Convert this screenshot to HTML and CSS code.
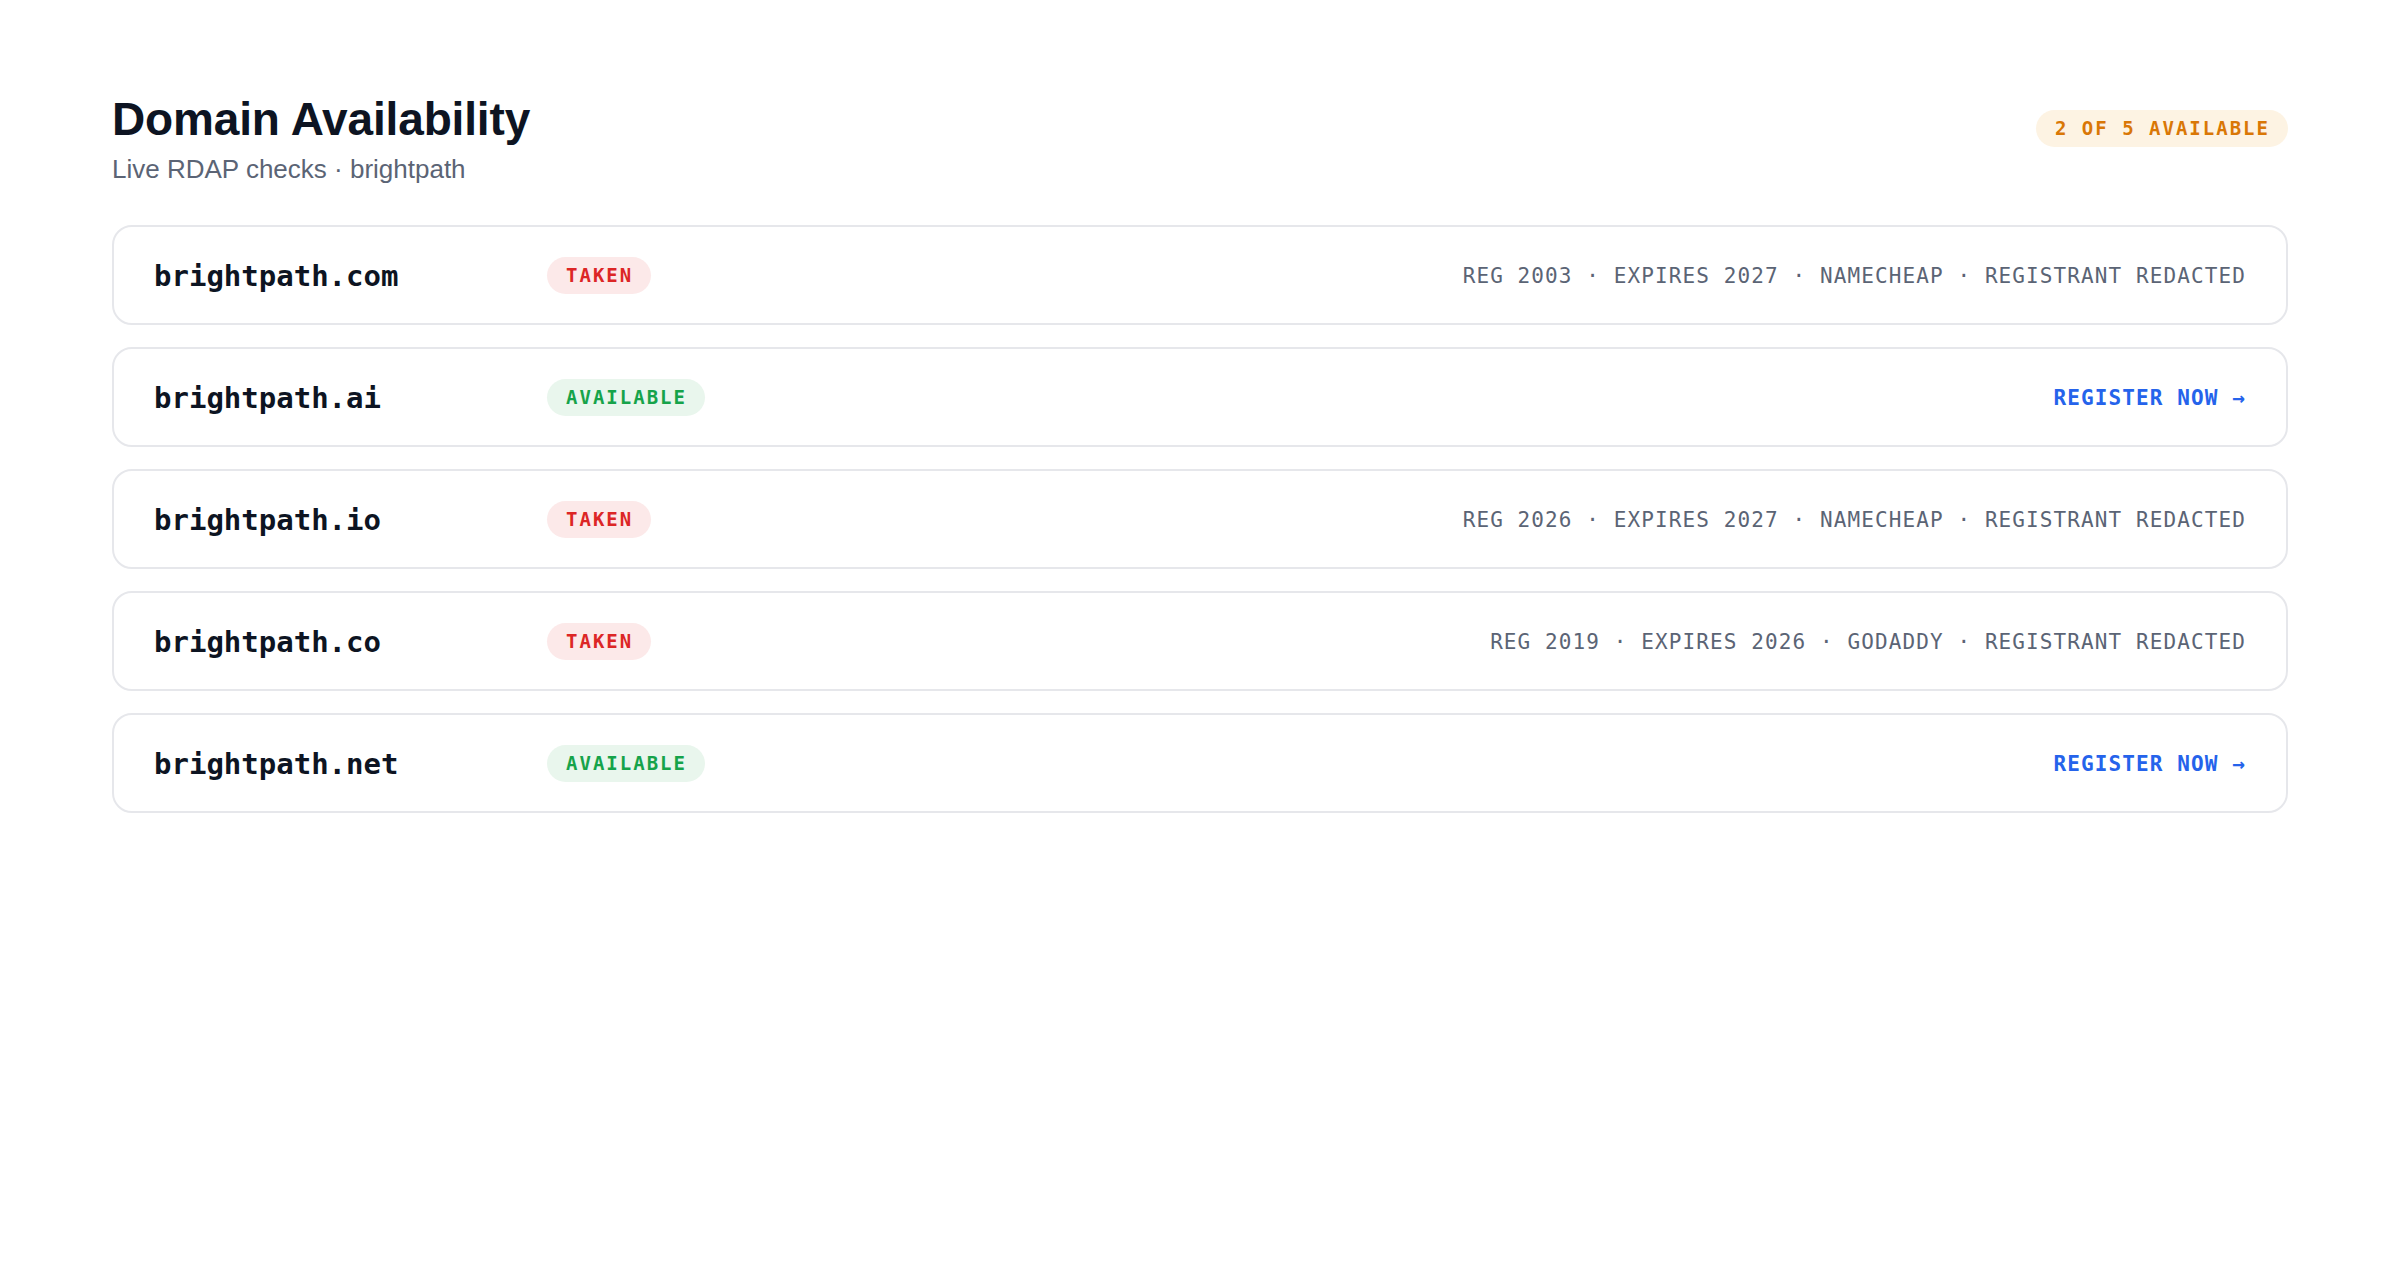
FILE: index.html
```html
<!DOCTYPE html>
<html lang="en">
<head>
<meta charset="utf-8">
<title>Domain Availability</title>
<link rel="stylesheet" href="styles.css">
</head>
<body>
<main class="page">
  <header class="header">
    <div class="titles">
      <h1 class="title">Domain Availability</h1>
      <p class="subtitle">Live RDAP checks · brightpath</p>
    </div>
    <span class="pill pill-summary">2 OF 5 AVAILABLE</span>
  </header>

  <ul class="list">
    <li class="card">
      <span class="domain">brightpath.com</span>
      <span class="pill pill-taken">TAKEN</span>
      <span class="meta">REG 2003 · EXPIRES 2027 · NAMECHEAP · REGISTRANT REDACTED</span>
    </li>
    <li class="card">
      <span class="domain">brightpath.ai</span>
      <span class="pill pill-available">AVAILABLE</span>
      <a class="register" href="#">REGISTER NOW →</a>
    </li>
    <li class="card">
      <span class="domain">brightpath.io</span>
      <span class="pill pill-taken">TAKEN</span>
      <span class="meta">REG 2026 · EXPIRES 2027 · NAMECHEAP · REGISTRANT REDACTED</span>
    </li>
    <li class="card">
      <span class="domain">brightpath.co</span>
      <span class="pill pill-taken">TAKEN</span>
      <span class="meta">REG 2019 · EXPIRES 2026 · GODADDY · REGISTRANT REDACTED</span>
    </li>
    <li class="card">
      <span class="domain">brightpath.net</span>
      <span class="pill pill-available">AVAILABLE</span>
      <a class="register" href="#">REGISTER NOW →</a>
    </li>
  </ul>
</main>
</body>
</html>
```

FILE: styles.css
```css
* {
  box-sizing: border-box;
}

html, body {
  margin: 0;
  padding: 0;
  background: #ffffff;
}

body {
  font-family: "Liberation Sans", Arial, sans-serif;
  color: #0d1422;
}

.page {
  padding: 93px 112px 0;
}

.header {
  display: flex;
  justify-content: space-between;
  align-items: flex-start;
}

.title {
  margin: 0;
  font-size: 46px;
  line-height: 53px;
  font-weight: 700;
  letter-spacing: -0.15px;
  color: #0d1422;
}

.subtitle {
  margin: 5px 0 0;
  font-size: 26px;
  line-height: 36px;
  color: #5b6475;
}

.pill {
  display: inline-block;
  font-family: "DejaVu Sans Mono", "Liberation Mono", monospace;
  font-weight: 700;
  font-size: 19px;
  line-height: 23px;
  letter-spacing: 2px;
  padding: 7px 18px 7px 19px;
  border-radius: 999px;
  white-space: nowrap;
}

.pill-summary {
  margin-top: 17px;
  background: #fdf3e3;
  color: #d97706;
}

.pill-taken {
  background: #fce9e9;
  color: #dc2626;
}

.pill-available {
  background: #e9f6ed;
  color: #16a34a;
}

.list {
  list-style: none;
  margin: 38px 0 0;
  padding: 0;
  display: flex;
  flex-direction: column;
  gap: 22px;
}

.card {
  display: flex;
  align-items: center;
  height: 100px;
  padding: 0 40px;
  border: 2px solid #e6e7eb;
  border-radius: 20px;
  background: #ffffff;
}

.domain {
  flex: 0 0 393px;
  padding-top: 2px;
  font-family: "DejaVu Sans Mono", "Liberation Mono", monospace;
  font-weight: 700;
  font-size: 29px;
  color: #0d1422;
}

.meta,
.register {
  margin-left: auto;
  padding-top: 2px;
  font-family: "DejaVu Sans Mono", "Liberation Mono", monospace;
  font-size: 21px;
  letter-spacing: 1.1px;
  white-space: nowrap;
}

.meta {
  color: #5b6475;
}

.register {
  font-weight: 700;
  color: #2563eb;
  text-decoration: none;
}
```
